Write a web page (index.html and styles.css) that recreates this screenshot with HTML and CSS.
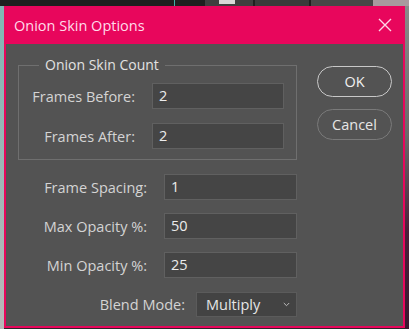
FILE: index.html
```html
<!DOCTYPE html>
<html>
<head>
<meta charset="utf-8">
<link rel="stylesheet" href="styles.css">
</head>
<body>
<div class="topstrip">
  <span class="seg s1"></span>
  <span class="seg s2"><i></i></span>
  <span class="seg s3"></span>
  <span class="seg s4"></span>
  <span class="seg s5"></span>
</div>
<div class="stage">
  <div class="edge-left"></div>
  <div class="dialog">
    <div class="titlebar">
      <span class="title">Onion Skin Options</span>
      <svg class="close" width="14" height="14" viewBox="0 0 14 14"><path d="M1 1L13 13M13 1L1 13" stroke="#ffd6e6" stroke-width="1.4" fill="none"/></svg>
    </div>
    <div class="body">
      <div class="main">
        <fieldset class="group">
          <legend>Onion Skin Count</legend>
          <div class="row in">
            <label>Frames Before:</label>
            <div class="field">2</div>
          </div>
          <div class="row in">
            <label>Frames After:</label>
            <div class="field">2</div>
          </div>
        </fieldset>
        <div class="rows">
          <div class="row out">
            <label>Frame Spacing:</label>
            <div class="field">1</div>
          </div>
          <div class="row out">
            <label>Max Opacity %:</label>
            <div class="field">50</div>
          </div>
          <div class="row out">
            <label>Min Opacity %:</label>
            <div class="field">25</div>
          </div>
          <div class="row blend">
            <label>Blend Mode:</label>
            <div class="select">Multiply<svg width="7" height="5" viewBox="0 0 7 5"><path d="M0.8 1L3.5 3.7L6.2 1" stroke="#bdbdbd" stroke-width="1" fill="none"/></svg></div>
          </div>
        </div>
      </div>
      <div class="buttons">
        <div class="btn ok">OK</div>
        <div class="btn cancel">Cancel</div>
      </div>
    </div>
  </div>
  <div class="edge-right"></div>
</div>
</body>
</html>
```

FILE: styles.css
```css
* { box-sizing: border-box; }
html, body { margin: 0; padding: 0; }
body {
  width: 409px;
  height: 329px;
  overflow: hidden;
  background: #2a2a2a;
  font-family: "Open Sans", "Noto Sans", sans-serif;
  font-size: 14.5px;
}
.topstrip {
  height: 6px;
  display: flex;
  background: #1f1f1f;
}
.seg { display: block; height: 6px; }
.s1 { background: #1f1f1f; border-right: 1px solid #3fb0a8; width: 175px; margin-right: 30px; }
.s2 { width: 48px; background: #3f3f3f; margin-right: 2px; position: relative; }
.s2 i { position: absolute; left: 14px; top: 0; width: 16px; height: 4px; background: #d8d8d8; }
.s3 { width: 54px; background: #3a3a3a; margin-right: 2px; }
.s4 { width: 62px; background: #474747; }
.s5 { flex: 1; background: #a89a9e; }

.stage {
  display: flex;
  height: 323px;
}
.edge-left { width: 4px; background: linear-gradient(#7fb7b4, #b8b8b8); }
.edge-right { flex: 1; background: linear-gradient(#8a8a8a 0%, #6a6a6a 40%, #4b1f3a 70%, #3a1830 100%); }

.dialog {
  width: 401px;
  height: 322px;
  display: flex;
  flex-direction: column;
  background: #e8065c;
}
.titlebar {
  height: 38px;
  display: flex;
  align-items: center;
  justify-content: space-between;
  padding: 0 13px 0 10px;
  color: #ffdbe9;
  font-size: 14.5px;
}
.title { margin-top: 1px; }
.close { margin-top: 0; }

.body {
  flex: 1;
  margin: 0 2px 2px 2px;
  background: #535353;
  display: flex;
  padding: 12px 0 0 12px;
}
.main { width: 279px; }

.group {
  margin: 0;
  padding: 9px 12px 10px 0;
  border: 1px solid #6f6f6f;
  height: 104px;
}
.group legend {
  color: #e2e2e2;
  padding: 0 6px;
  margin-left: 20px;
  font-size: 14px;
  line-height: 18px;
}
.row {
  display: flex;
  align-items: center;
  justify-content: flex-end;
  color: #d4d4d4;
}
.row label { margin-right: 17px; }
.row.in + .row.in { margin-top: 14px; }
.field {
  background: #454545;
  border: 1px solid #606060;
  color: #ececec;
  height: 26px;
  line-height: 24px;
  padding-left: 6px;
}
.row.in .field { width: 132px; }

.rows {
  padding-top: 14px;
  width: 279px;
}
.row.out .field { width: 133px; }
.row.out + .row.out { margin-top: 13px; }
.row.blend { margin-top: 14px; }
.row.blend label { margin-right: 11px; }
.select {
  width: 101px;
  height: 25px;
  background: #434343;
  border: 1px solid #5b5b5b;
  color: #e6e6e6;
  display: flex;
  align-items: center;
  justify-content: space-between;
  padding: 0 6px 0 9px;
}

.buttons {
  padding: 10px 0 0 20px;
  display: flex;
  flex-direction: column;
  gap: 12px;
}
.btn {
  width: 75px;
  height: 31px;
  border-radius: 16px;
  display: flex;
  align-items: center;
  justify-content: center;
  color: #f0f0f0;
}
.ok { border: 1px solid #c8c8c8; }
.cancel { border: 1px solid #7a7a7a; color: #e6e6e6; }
```
